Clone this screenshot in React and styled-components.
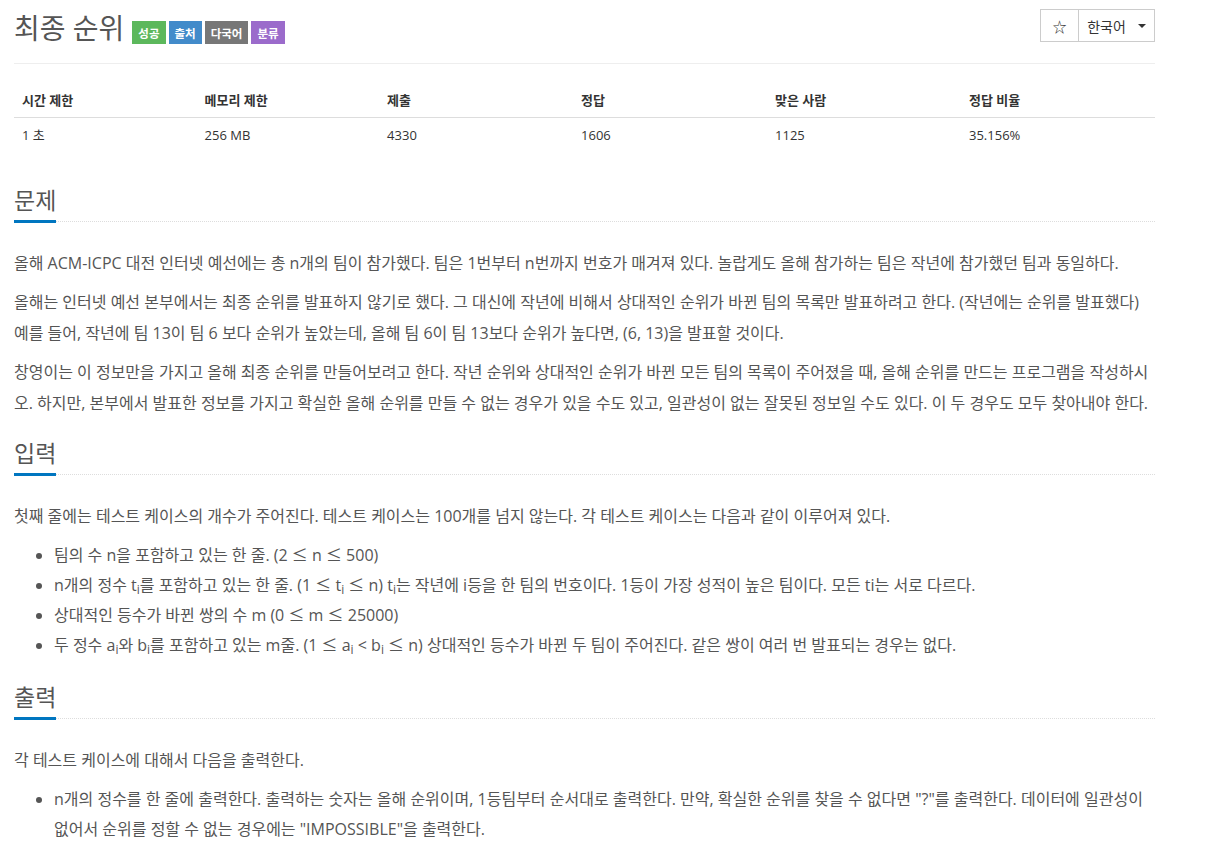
import React from 'react';
import styled, { createGlobalStyle } from 'styled-components';

const Global = createGlobalStyle`
  html, body { margin: 0; padding: 0; background: #fff; }
  body {
    font-family: "Open Sans", "Noto Sans CJK KR", sans-serif;
    color: #555;
  }
`;

const Page = styled.div`
  width: 1141px;
  margin-left: 14px;
`;

const Header = styled.header`
  display: flex;
  justify-content: space-between;
  align-items: flex-start;
  padding-top: 9px;
  padding-bottom: 18px;
  border-bottom: 1px solid #eee;
`;

const TitleRow = styled.div`
  display: flex;
  align-items: flex-end;
`;

const Title = styled.h1`
  margin: 1px 8px -1px 0;
  font-size: 28px;
  line-height: 36px;
  font-weight: 400;
  color: #555;
`;

const Labels = styled.div`
  display: flex;
  gap: 3px;
  margin-bottom: 1px;
`;

const Label = styled.span`
  display: inline-flex;
  align-items: center;
  justify-content: center;
  height: 23px;
  padding: 0 6px;
  font-size: 11.5px;
  font-weight: 700;
  color: #fff;
  background: ${(p) => p.$bg};
`;

const BtnGroup = styled.div`
  display: flex;
`;

const Btn = styled.button`
  display: inline-flex;
  align-items: center;
  justify-content: center;
  gap: 12px;
  height: 33px;
  width: ${(p) => p.$w}px;
  padding: 0;
  margin: 0;
  background: #fff;
  border: 1px solid #ccc;
  ${(p) => (p.$joined ? 'border-left: none;' : '')}
  font-family: inherit;
  font-size: 14px;
  color: #333;
`;

const Caret = styled.span`
  display: inline-block;
  width: 0;
  height: 0;
  border-top: 4px solid #333;
  border-left: 4px solid transparent;
  border-right: 4px solid transparent;
`;

const InfoTable = styled.table`
  width: 100%;
  margin-top: 20px;
  margin-bottom: 33px;
  border-collapse: collapse;
  color: #333;
  font-size: 13px;
`;

const Th = styled.th`
  width: ${(p) => p.$w}%;
  text-align: left;
  padding: 8px;
  line-height: 17px;
  font-weight: 700;
  border-bottom: 1px solid #ddd;
`;

const Td = styled.td`
  padding: 9px 8px 8px;
  line-height: 17px;
`;

const Section = styled.section`
  margin-top: 19px;
`;

const Headline = styled.div`
  border-bottom: 1px dotted #ddd;
  margin-bottom: 26px;
`;

const H2 = styled.h2`
  display: inline-block;
  vertical-align: top;
  margin: 0 0 -2px;
  padding-bottom: 5px;
  font-size: 23px;
  line-height: 30px;
  font-weight: 400;
  color: #555;
  border-bottom: 3px solid #0076c0;
`;

const P = styled.p`
  margin: 0 0 8px;
  font-size: 16px;
  line-height: 31px;
`;

const List = styled.ul`
  margin: 0 0 22px;
  padding-left: 40px;
  font-size: 16px;
  line-height: 30px;
`;

const Sub = styled.sub`
  font-size: 75%;
  line-height: 0;
  position: relative;
  vertical-align: baseline;
  bottom: -0.25em;
`;

const Le = styled.span`
  font-family: "Noto Sans CJK KR", sans-serif;
  line-height: 1;
`;

const columns = [
  ['시간 제한', '1 초', 16],
  ['메모리 제한', '256 MB', 16],
  ['제출', '4330', 17],
  ['정답', '1606', 17],
  ['맞은 사람', '1125', 17],
  ['정답 비율', '35.156%', 17],
];

export default function App() {
  return (
    <Page>
      <Global />
      <Header>
        <TitleRow>
          <Title>최종 순위</Title>
          <Labels>
            <Label $bg="#5cb85c">성공</Label>
            <Label $bg="#428bca">출처</Label>
            <Label $bg="#777777">다국어</Label>
            <Label $bg="#9b6bcb">분류</Label>
          </Labels>
        </TitleRow>
        <BtnGroup>
          <Btn $w={39}>☆</Btn>
          <Btn $w={76} $joined>
            한국어 <Caret />
          </Btn>
        </BtnGroup>
      </Header>

      <InfoTable>
        <thead>
          <tr>
            {columns.map(([h, , w]) => (
              <Th key={h} $w={w}>{h}</Th>
            ))}
          </tr>
        </thead>
        <tbody>
          <tr>
            {columns.map(([h, v]) => (
              <Td key={h}>{v}</Td>
            ))}
          </tr>
        </tbody>
      </InfoTable>

      <Section>
        <Headline><H2>문제</H2></Headline>
        <P>올해 ACM-ICPC 대전 인터넷 예선에는 총 n개의 팀이 참가했다. 팀은 1번부터 n번까지 번호가 매겨져 있다. 놀랍게도 올해 참가하는 팀은 작년에 참가했던 팀과 동일하다.</P>
        <P>올해는 인터넷 예선 본부에서는 최종 순위를 발표하지 않기로 했다. 그 대신에 작년에 비해서 상대적인 순위가 바뀐 팀의 목록만 발표하려고 한다. (작년에는 순위를 발표했다)<br />예를 들어, 작년에 팀 13이 팀 6 보다 순위가 높았는데, 올해 팀 6이 팀 13보다 순위가 높다면, (6, 13)을 발표할 것이다.</P>
        <P>창영이는 이 정보만을 가지고 올해 최종 순위를 만들어보려고 한다. 작년 순위와 상대적인 순위가 바뀐 모든 팀의 목록이 주어졌을 때, 올해 순위를 만드는 프로그램을 작성하시오. 하지만, 본부에서 발표한 정보를 가지고 확실한 올해 순위를 만들 수 없는 경우가 있을 수도 있고, 일관성이 없는 잘못된 정보일 수도 있다. 이 두 경우도 모두 찾아내야 한다.</P>
      </Section>

      <Section>
        <Headline><H2>입력</H2></Headline>
        <P>첫째 줄에는 테스트 케이스의 개수가 주어진다. 테스트 케이스는 100개를 넘지 않는다. 각 테스트 케이스는 다음과 같이 이루어져 있다.</P>
        <List>
          <li>팀의 수 n을 포함하고 있는 한 줄. (2 <Le>≤</Le> n <Le>≤</Le> 500)</li>
          <li>n개의 정수 t<Sub>i</Sub>를 포함하고 있는 한 줄. (1 <Le>≤</Le> t<Sub>i</Sub> <Le>≤</Le> n) t<Sub>i</Sub>는 작년에 i등을 한 팀의 번호이다. 1등이 가장 성적이 높은 팀이다. 모든 ti는 서로 다르다.</li>
          <li>상대적인 등수가 바뀐 쌍의 수 m (0 <Le>≤</Le> m <Le>≤</Le> 25000)</li>
          <li>두 정수 a<Sub>i</Sub>와 b<Sub>i</Sub>를 포함하고 있는 m줄. (1 <Le>≤</Le> a<Sub>i</Sub> &lt; b<Sub>i</Sub> <Le>≤</Le> n) 상대적인 등수가 바뀐 두 팀이 주어진다. 같은 쌍이 여러 번 발표되는 경우는 없다.</li>
        </List>
      </Section>

      <Section>
        <Headline><H2>출력</H2></Headline>
        <P>각 테스트 케이스에 대해서 다음을 출력한다.</P>
        <List>
          <li>n개의 정수를 한 줄에 출력한다. 출력하는 숫자는 올해 순위이며, 1등팀부터 순서대로 출력한다. 만약, 확실한 순위를 찾을 수 없다면 "?"를 출력한다. 데이터에 일관성이 없어서 순위를 정할 수 없는 경우에는 "IMPOSSIBLE"을 출력한다.</li>
        </List>
      </Section>
    </Page>
  );
}
